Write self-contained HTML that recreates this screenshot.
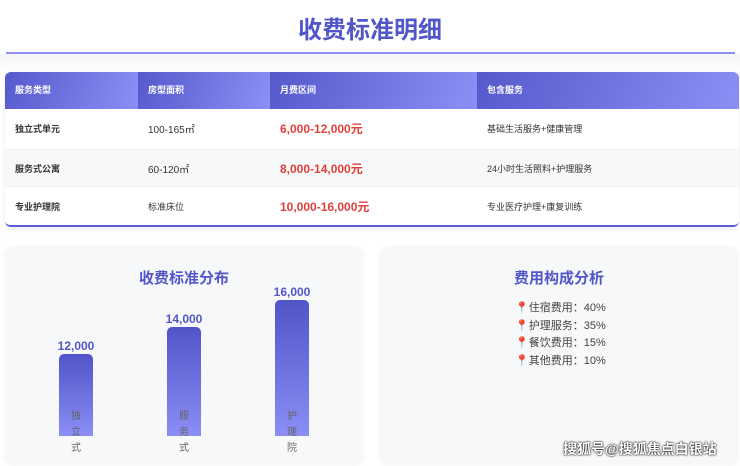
<!DOCTYPE html>
<html><head><meta charset="utf-8"><style>
*{margin:0;padding:0;box-sizing:border-box}
body{width:740px;height:466px;background:#fff;font-family:"Liberation Sans","Noto Sans CJK SC",sans-serif;position:relative;overflow:hidden}
.t{position:absolute;left:0;width:740px;top:10px;text-align:center;font-size:24px;font-weight:bold;color:#5157c9}
.hl{position:absolute;left:6px;width:729px;top:52px;height:2px;background:#8a8ff0}
.bg{position:absolute;left:0;top:54px;width:740px;height:412px;background:linear-gradient(#f6f6f7,#fff 20px)}
.tbl{position:absolute;left:5px;top:72px;width:734px;height:155px;background:#fff;border-radius:6px;overflow:hidden;box-shadow:0 2px 6px rgba(0,0,0,.08);border-bottom:2px solid #5b5fd0}
.row{position:absolute;left:0;width:734px;display:flex;align-items:center}
.row div{position:absolute;font-size:10px;color:#333}
.h{top:0;height:37px}
.h div{top:0;height:37px;line-height:37px;color:#fff;font-weight:bold;font-size:9px;padding-left:10px;background:linear-gradient(110deg,#5559cc,#8b8ff5)}
.p{color:#e0403a!important;font-weight:bold;font-size:12px!important}
.card{position:absolute;top:247px;height:218px;background:#f7f8fa;border-radius:8px;box-shadow:0 0 5px rgba(0,0,0,.06)}
.ct{position:absolute;width:100%;text-align:center;top:20px;font-size:15px;font-weight:bold;color:#5157c9}
.bar{position:absolute;width:34px;border-radius:5px 5px 0 0;background:linear-gradient(#5154c8,#8a8ef5)}
.v{position:absolute;width:60px;text-align:center;font-size:12px;font-weight:bold;color:#5157c9}
.lb{position:absolute;width:34px;text-align:center;font-size:10px;color:#666;line-height:16px}
.li{position:absolute;left:135px;font-size:11px;color:#444;line-height:17.5px}
</style></head><body>
<div class="t">收费标准明细</div>
<div class="hl"></div>
<div class="bg"></div>
<div class="tbl">
<div class="row h"><div style="left:0;width:133px">服务类型</div><div style="left:133px;width:132px">房型面积</div><div style="left:265px;width:207px">月费区间</div><div style="left:472px;width:262px">包含服务</div></div>
<div class="row" style="top:37px;height:39px;background:#fff"><div style="left:10px;font-weight:bold;font-size:9px">独立式单元</div><div style="left:143px">100-165㎡</div><div class="p" style="left:275px">6,000-12,000元</div><div style="left:482px;font-size:9px">基础生活服务+健康管理</div></div>
<div class="row" style="top:77px;height:38px;background:#f7f8fa;border-top:1px solid #eee;border-bottom:1px solid #eee"><div style="left:10px;font-weight:bold;font-size:9px">服务式公寓</div><div style="left:143px">60-120㎡</div><div class="p" style="left:275px">8,000-14,000元</div><div style="left:482px;font-size:9px">24小时生活照料+护理服务</div></div>
<div class="row" style="top:116px;height:37px;background:#fff"><div style="left:10px;font-weight:bold;font-size:9px">专业护理院</div><div style="left:143px;font-size:9px">标准床位</div><div class="p" style="left:275px">10,000-16,000元</div><div style="left:482px;font-size:9px">专业医疗护理+康复训练</div></div>
</div>
<div class="card" style="left:5px;width:358px">
<div class="ct">收费标准分布</div>
<div class="bar" style="left:54px;top:107px;height:82px"></div><div class="v" style="left:41px;top:92px">12,000</div><div class="lb" style="left:54px;top:162px">独<br>立<br>式</div>
<div class="bar" style="left:162px;top:80px;height:109px"></div><div class="v" style="left:149px;top:65px">14,000</div><div class="lb" style="left:162px;top:162px">服<br>务<br>式</div>
<div class="bar" style="left:270px;top:53px;height:136px"></div><div class="v" style="left:257px;top:38px">16,000</div><div class="lb" style="left:270px;top:162px">护<br>理<br>院</div>
</div>
<div class="card" style="left:380px;width:358px">
<div class="ct">费用构成分析</div>
<div class="li" style="top:53px"><span style="color:#d33">📍</span>住宿费用：40%<br><span style="color:#d33">📍</span>护理服务：35%<br><span style="color:#d33">📍</span>餐饮费用：15%<br><span style="color:#d33">📍</span>其他费用：10%</div>
<div style="position:absolute;left:183px;top:192px;font-size:14px;color:#fff;font-weight:bold;text-shadow:0 0 2px #000,0 0 1px #000">搜狐号@搜狐焦点白银站</div>
</div>
</body></html>
